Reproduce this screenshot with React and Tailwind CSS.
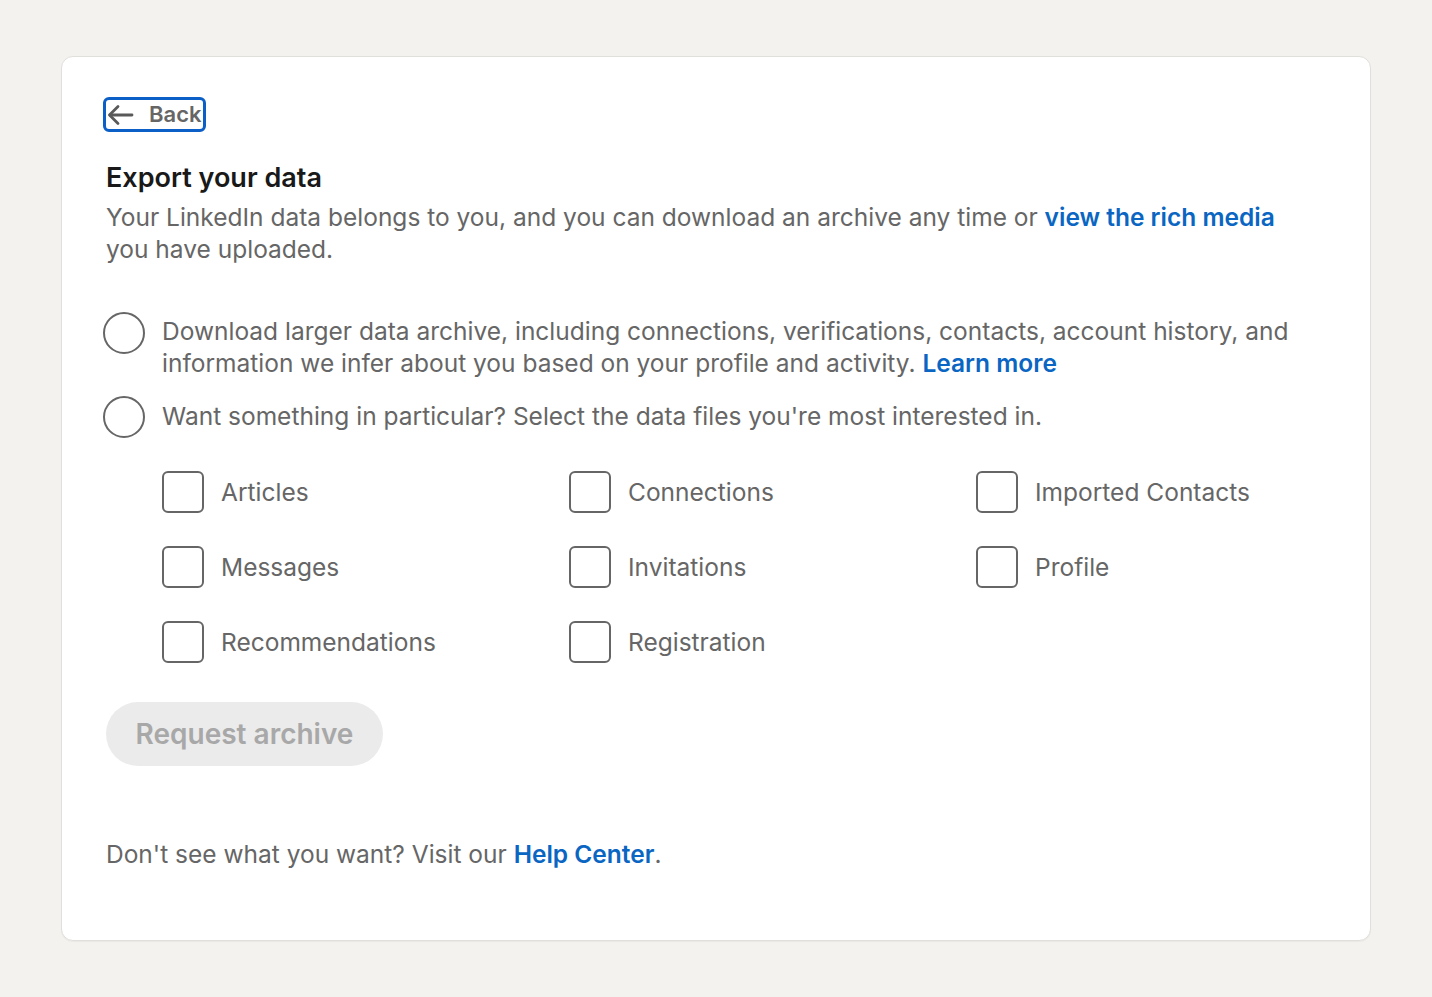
import React, { useState } from "react";

const files = [
  "Articles",
  "Connections",
  "Imported Contacts",
  "Messages",
  "Invitations",
  "Profile",
  "Recommendations",
  "Registration",
];

const App = () => {
  const [choice, setChoice] = useState("");
  const [checked, setChecked] = useState({});

  const toggle = (name) => setChecked({ ...checked, [name]: !checked[name] });

  return (
    <div
      className="min-h-[997px] bg-[#f4f2ee] pt-[56px] px-[61px]"
      style={{ fontFamily: "Inter, 'Noto Sans', sans-serif" }}
    >
      <div className="w-[1310px] h-[885px] bg-white rounded-[12px] border border-[#e0dfdc] shadow-[0_1px_1px_rgba(0,0,0,0.04)] pl-[44px] pt-[40px]">
        {/* back link */}
        <button className="flex items-center gap-[15px] h-[35px] w-[103px] border-[3px] border-[#0b5fc6] rounded-[6px] text-[22px] font-semibold text-[#666666] ml-[-3px] pl-[1px]">
          <svg width="27" height="22" viewBox="0 0 27 22" fill="none" stroke="#595959" strokeWidth="2.8" strokeLinecap="round" strokeLinejoin="round">
            <path d="M25 11H3" />
            <path d="M11 2.5L2.5 11l8.5 8.5" />
          </svg>
          <span>Back</span>
        </button>

        <h1 className="mt-[29px] text-[27px] leading-[34px] font-semibold text-[#191919]">Export your data</h1>
        <p className="mt-[6px] text-[24.5px] leading-[32px] text-[#666666] w-[1200px]">
          Your LinkedIn data belongs to you, and you can download an archive any time or{" "}
          <a className="text-[#0a66c2] font-semibold">view the rich media</a> you have uploaded.
        </p>

        <div className="mt-[50px] flex flex-col gap-[21px] text-[24.5px] leading-[32px] text-[#666666]">
          <label className="flex items-start gap-[17px] ml-[-3px]">
            <span
              onClick={() => setChoice("all")}
              className="mt-[-3px] w-[42px] h-[42px] shrink-0 rounded-full border-2 border-[#666666]"
            />
            <span className="w-[1140px]">
              Download larger data archive, including connections, verifications, contacts, account history, and information we infer about you based on your profile and activity.{" "}
              <a className="text-[#0a66c2] font-semibold">Learn more</a>
            </span>
          </label>
          <label className="flex items-start gap-[17px] ml-[-3px]">
            <span
              onClick={() => setChoice("some")}
              className="mt-[-4px] w-[42px] h-[42px] shrink-0 rounded-full border-2 border-[#666666]"
            />
            <span>Want something in particular? Select the data files you're most interested in.</span>
          </label>
        </div>

        <div className="mt-[33px] ml-[56px] grid grid-cols-[407px_407px_407px] gap-y-[33px]">
          {files.map((name) => (
            <label key={name} className="flex items-center gap-[17px] text-[24.5px] text-[#666666]">
              <span
                onClick={() => toggle(name)}
                className="w-[42px] h-[42px] rounded-[6px] border-2 border-[#666666]"
              />
              <span>{name}</span>
            </label>
          ))}
        </div>

        <button
          disabled
          className="mt-[39px] h-[64px] w-[277px] rounded-full bg-[#ebebeb] text-[28px] font-semibold text-[#a8a8a8]"
        >
          Request archive
        </button>

        <p className="mt-[72px] text-[24.5px] leading-[32px] text-[#666666]">
          Don't see what you want? Visit our <a className="text-[#0a66c2] font-semibold">Help Center</a>.
        </p>
      </div>
    </div>
  );
};

export default App;
